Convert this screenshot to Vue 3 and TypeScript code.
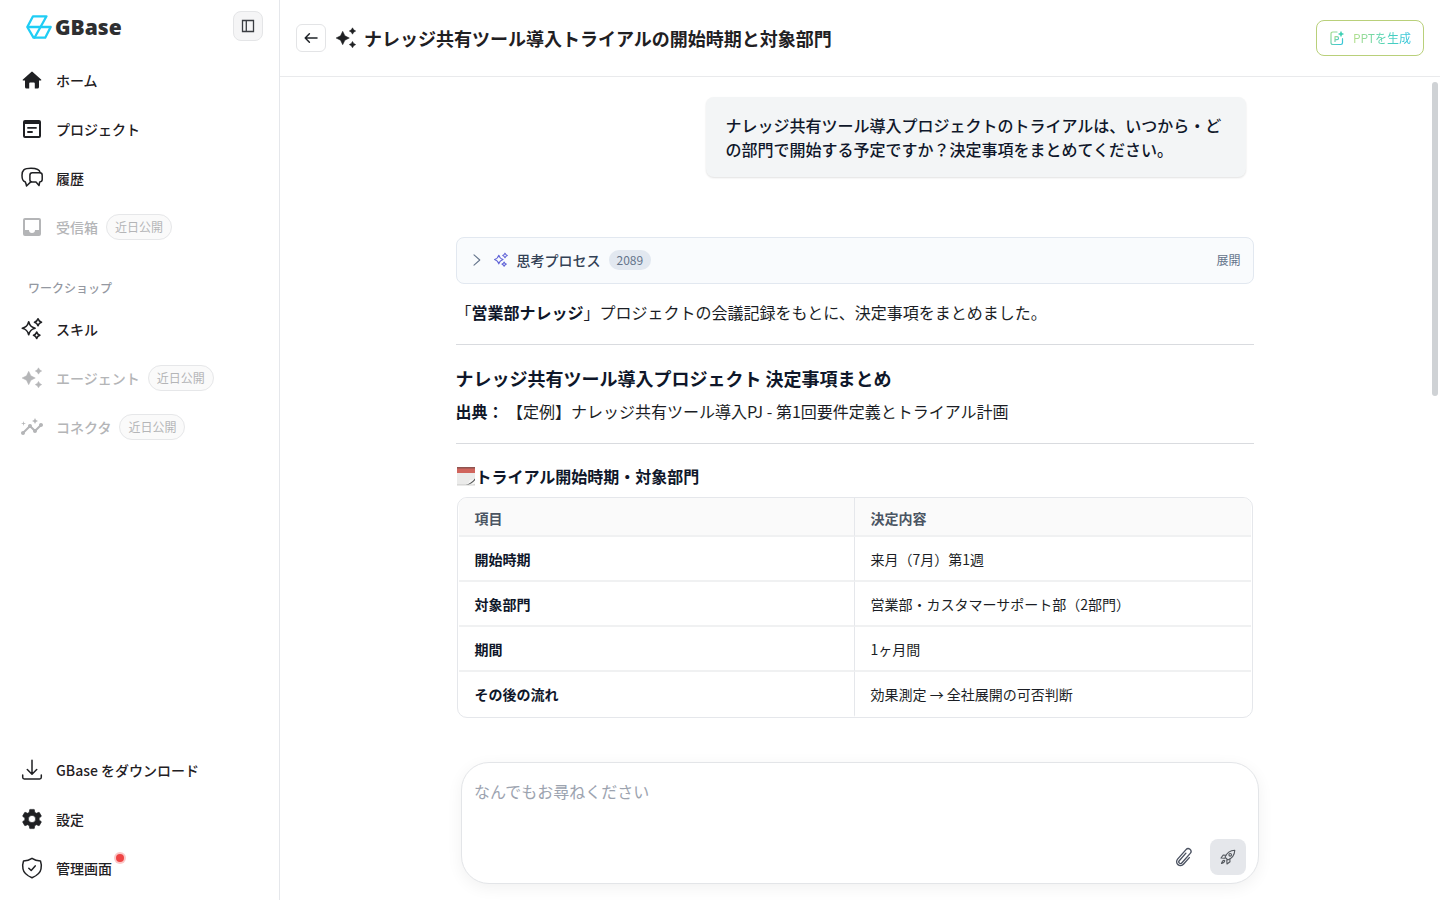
<script setup lang="ts">
import { ref } from 'vue'

interface NavItem {
  label: string
  icon: string
  soon?: boolean
  dot?: boolean
}

const primary: NavItem[] = [
  { label: 'ホーム', icon: 'home' },
  { label: 'プロジェクト', icon: 'project' },
  { label: '履歴', icon: 'history' },
  { label: '受信箱', icon: 'inbox', soon: true },
]

const workshop: NavItem[] = [
  { label: 'スキル', icon: 'skill' },
  { label: 'エージェント', icon: 'agent', soon: true },
  { label: 'コネクタ', icon: 'connector', soon: true },
]

const footer: NavItem[] = [
  { label: 'GBase をダウンロード', icon: 'download' },
  { label: '設定', icon: 'settings' },
  { label: '管理画面', icon: 'admin', dot: true },
]

const groups = [
  { key: 'primary', title: '', items: primary },
  { key: 'workshop', title: 'ワークショップ', items: workshop },
  { key: 'footer', title: '', items: footer },
]

const icons: Record<string, string> = {
  home: '<path fill="currentColor" d="M11.3 3.900a1 1 0 0 1 1.400 0l8.400 7.700c.4.4.2 1-.4 1H19V19a1.600 1.600 0 0 1-1.600 1.600h-2.600v-5.200a.9.9 0 0 0-.9-.9h-3.800a.9.9 0 0 0-.9.9v5.200H6.600A1.600 1.600 0 0 1 5 19v-6.400H3.300c-.6 0-.8-.6-.4-1z"/>',
  project:
    '<path fill="currentColor" fill-rule="evenodd" d="M5 3h14a2 2 0 0 1 2 2v14a2 2 0 0 1-2 2H5a2 2 0 0 1-2-2V5a2 2 0 0 1 2-2zm0 4v12h14V7z"/><path stroke="currentColor" stroke-width="1.800" fill="none" d="M7.300 10.800h9.400M7.300 15h5.400"/>',
  history:
    '<path fill="none" stroke="currentColor" stroke-width="1.500" stroke-linejoin="round" stroke-linecap="round" d="M11 15.600 6.500 20c-.2-1.600-.5-2.900-1.400-4.200C2.900 15.200 2 13.300 2 9.400 2 4.200 3.900 2.200 11 2.200c6.100 0 8.600 1.100 9.100 4.400"/><path fill="none" stroke="currentColor" stroke-width="1.500" stroke-linejoin="round" stroke-linecap="round" d="M12.300 6.800h7.500a2.400 2.400 0 0 1 2.400 2.400v4.400c0 1.600-.8 2.200-2.500 2.400l-.7 3.500-3-3.400h-3.700a2.400 2.400 0 0 1-2.400-2.400V9.200a2.400 2.400 0 0 1 2.400-2.400z"/>',
  inbox:
    '<path fill="currentColor" d="M19 3H5a2 2 0 0 0-2 2v14a2 2 0 0 0 2 2h14a2 2 0 0 0 2-2V5a2 2 0 0 0-2-2zm0 12h-4a3 3 0 0 1-6 0H5V5h14z"/>',
  skill:
    '<g fill="none" stroke="currentColor" stroke-width="1.600" stroke-linejoin="round"><path d="M8.700 4.800c1.100 4 2.400 5.400 6.400 6.500-4 1.100-5.300 2.500-6.400 6.500-1.100-4-2.400-5.400-6.400-6.500 4-1.100 5.300-2.500 6.400-6.500z"/><path d="M18 1.700c.7 2.200 1.300 2.800 3.500 3.500-2.200.7-2.800 1.300-3.500 3.500-.7-2.200-1.300-2.800-3.500-3.500 2.200-.7 2.800-1.300 3.500-3.500z"/><path d="M16.700 15c.6 2 1.200 2.600 3.200 3.200-2 .6-2.600 1.200-3.200 3.200-.6-2-1.200-2.600-3.200-3.200 2-.6 2.600-1.200 3.200-3.200z"/></g>',
  agent:
    '<path fill="currentColor" stroke="currentColor" stroke-width=".5" stroke-linejoin="round" d="M8.700 5.300 10.900 9.800 15.300 12 10.900 14.200 8.700 18.700 6.500 14.200 2.100 12 6.500 9.800zM18.500 1.800l1.200 2 2 1.200-2 1.200-1.200 2-1.200-2-2-1.200 2-1.200zM18.500 15.400l1.200 2 2 1.200-2 1.200-1.200 2-1.200-2-2-1.200 2-1.200z"/>',
  connector:
    '<path fill="currentColor" d="M21 8c-1.450 0-2.260 1.440-1.930 2.510l-3.550 3.560c-.3-.09-.74-.09-1.040 0l-2.550-2.550C12.270 10.450 11.460 9 10 9c-1.450 0-2.270 1.440-1.930 2.520l-4.560 4.550C2.440 15.740 1 16.550 1 18c0 1.100.9 2 2 2 1.450 0 2.260-1.440 1.930-2.510l4.550-4.560c.3.09.74.09 1.040 0l2.550 2.550C12.730 16.550 13.540 18 15 18c1.450 0 2.270-1.440 1.930-2.520l3.560-3.550C21.560 12.260 23 11.450 23 10c0-1.100-.9-2-2-2zM15 9l.94-2.070L18 6l-2.060-.93L15 3l-.92 2.070L12 6l2.080.93zM3.500 11 4 9l2-.5L4 8l-.5-2L3 8l-2 .5L3 9z"/>',
  download:
    '<path fill="none" stroke="currentColor" stroke-width="1.500" stroke-linecap="round" stroke-linejoin="round" d="M12 2.200v13.600M7.300 11.500l4.700 4.700 4.700-4.700M2.700 17v2.300a1.600 1.600 0 0 0 1.600 1.600h15.400a1.600 1.600 0 0 0 1.600-1.600V17"/>',
  settings:
    '<path fill="currentColor" stroke="currentColor" stroke-width=".6" d="M19.140 12.940c.04-.3.06-.61.06-.94 0-.32-.02-.64-.07-.94l2.030-1.580c.18-.14.23-.41.12-.61l-1.920-3.320c-.12-.22-.37-.29-.59-.22l-2.390.96c-.5-.38-1.030-.7-1.620-.94l-.36-2.540c-.04-.24-.24-.41-.48-.41h-3.840c-.24 0-.43.17-.47.41l-.36 2.540c-.59.24-1.130.57-1.620.94l-2.390-.96c-.22-.08-.47 0-.59.22L2.740 8.870c-.12.21-.08.47.12.61l2.030 1.580c-.05.3-.09.63-.09.94s.02.64.07.94l-2.030 1.580c-.18.14-.23.41-.12.61l1.920 3.320c.12.22.37.29.59.22l2.390-.96c.5.38 1.030.7 1.620.94l.36 2.540c.05.24.24.41.48.41h3.840c.24 0 .44-.17.47-.41l.36-2.540c.59-.24 1.130-.56 1.620-.94l2.390.96c.22.08.47 0 .59-.22l1.920-3.320c.12-.22.07-.47-.12-.61zM12 15.600a3.600 3.600 0 1 1 0-7.200 3.600 3.600 0 0 1 0 7.200z"/>',
  admin:
    '<path fill="none" stroke="currentColor" stroke-width="1.500" stroke-linecap="round" stroke-linejoin="round" d="M12 2.300c2.800 2 5.600 2.600 8.500 2.700.9 2.300.9 5.400.5 8-.7 4.300-5 7-9 8.700-4-1.700-8.300-4.400-9-8.700-.4-2.600-.4-5.700.5-8 2.900-.1 5.700-.7 8.500-2.700zM8.800 12.200l2.400 2.300 4-4.600"/>',
}

const rows = [
  { item: '開始時期', decision: '来月（7月）第1週' },
  { item: '対象部門', decision: '営業部・カスタマーサポート部（2部門）' },
  { item: '期間', decision: '1ヶ月間' },
  { item: 'その後の流れ', decision: '効果測定 → 全社展開の可否判断' },
]

const draft = ref('')
</script>

<template>
  <div class="app">
    <aside class="sidebar">
      <div class="brand-row">
        <a class="brand" href="#">
          <svg class="brand-mark" viewBox="0 0 26 24" aria-hidden="true">
            <g fill="none" stroke="#1fcdf5" stroke-width="2.300" stroke-linejoin="round">
              <path d="M7 1.300h13.500L8.500 22.700H7.500L1.300 12z" />
              <path d="M1.300 12h23.400l-5.500 10.700H8" />
            </g>
          </svg>
          <span class="brand-name">GBase</span>
        </a>
        <button class="toggle" type="button" aria-label="サイドバーを切り替え">
          <svg viewBox="0 0 14 14" aria-hidden="true">
            <path fill="none" stroke="#3a3d42" stroke-width="1.300" d="M1.500 1.500h11v11h-11zM5.300 1.500v11" />
          </svg>
        </button>
      </div>
      <nav v-for="group in groups" :key="group.key" class="nav" :class="group.key">
        <h2 v-if="group.title" class="nav-title">{{ group.title }}</h2>
        <button
          v-for="item in group.items"
          :key="item.label"
          class="nav-item"
          type="button"
          :disabled="item.soon"
        >
          <svg class="nav-icon" viewBox="0 0 24 24" aria-hidden="true" v-html="icons[item.icon]"></svg>
          <span class="nav-label">{{ item.label }}<i v-if="item.dot" class="dot"></i></span>
          <span v-if="item.soon" class="soon">近日公開</span>
        </button>
      </nav>
    </aside>

    <main class="main">
      <header class="topbar">
        <button class="back" type="button" aria-label="戻る">
          <svg viewBox="0 0 16 16" aria-hidden="true">
            <path fill="none" stroke="#1f2328" stroke-width="1.500" stroke-linecap="round" stroke-linejoin="round" d="M14 8H2.200M6.400 3.800 2.200 8l4.200 4.200" />
          </svg>
        </button>
        <svg class="title-icon" viewBox="0 0 24 24" aria-hidden="true" v-html="icons.agent"></svg>
        <h1 class="title">ナレッジ共有ツール導入トライアルの開始時期と対象部門</h1>
        <button class="ppt" type="button">
          <svg viewBox="0 0 16 16" aria-hidden="true">
            <defs>
              <linearGradient id="ppt-stroke" x1="0" y1="0" x2="1" y2="1">
                <stop offset="0" stop-color="#a5dc8c" />
                <stop offset="1" stop-color="#2cc4dc" />
              </linearGradient>
            </defs>
            <g fill="none" stroke="url(#ppt-stroke)" stroke-width="1.200" stroke-linecap="round" stroke-linejoin="round">
              <path d="M8 2H3.700A1.700 1.700 0 0 0 2 3.700v9.100a1.700 1.700 0 0 0 1.700 1.700h8.100a1.700 1.700 0 0 0 1.700-1.700V8.700" />
              <path d="M6 11.500V6.700h2a1.500 1.500 0 0 1 0 3H6" />
            </g>
            <path fill="#3fd0b4" d="m12 .8 1 2.200 2.200 1-2.200 1-1 2.200-1-2.200-2.200-1 2.200-1z" />
          </svg>
          <span>PPTを生成</span>
        </button>
      </header>

      <div class="scroller">
        <div class="thread">
          <p class="bubble">ナレッジ共有ツール導入プロジェクトのトライアルは、いつから・どの部門で開始する予定ですか？決定事項をまとめてください。</p>

          <button class="thinking" type="button">
            <svg class="chevron" viewBox="0 0 12 12" aria-hidden="true">
              <path fill="none" stroke="#64748b" stroke-width="1.100" stroke-linecap="round" stroke-linejoin="round" d="M3 .8 8.800 6 3 11.200" />
            </svg>
            <svg class="spark" viewBox="0 0 24 24" aria-hidden="true" v-html="icons.skill"></svg>
            <span class="thinking-title">思考プロセス</span>
            <span class="count">2089</span>
            <span class="expand">展開</span>
          </button>

          <article class="answer">
            <p>「<strong>営業部ナレッジ</strong>」プロジェクトの会議記録をもとに、決定事項をまとめました。</p>
            <hr />
            <h2>ナレッジ共有ツール導入プロジェクト 決定事項まとめ</h2>
            <p class="source"><strong>出典：</strong> 【定例】ナレッジ共有ツール導入PJ - 第1回要件定義とトライアル計画</p>
            <hr />
            <h3>
              <svg class="calendar" viewBox="0 0 20 20" aria-hidden="true">
                <path fill="#ebebea" d="M1 2h18v10l-8 7H1z" />
                <path fill="#d0655d" d="M1 2h18v5H1z" />
                <path fill="#8e5450" d="M1 1h18v1.500H1z" />
                <path fill="#d4d4d2" d="M1 18.300h11l7-.8V19.500H1z" />
                <path fill="#f7f7f6" d="M10 18.300c2.500-1 3.500-2.300 3.800-4.300 2 .2 3.800-.6 5.200-2v5.500l-2 1z" />
                <path fill="#565859" d="M9.800 19c3.300-.8 6.800-3.200 9.200-6.700v2C16.800 17 14 18.800 9.800 19z" />
              </svg>
              <span>トライアル開始時期・対象部門</span>
            </h3>
            <div class="table-card">
              <table>
                <thead>
                  <tr>
                    <th scope="col">項目</th>
                    <th scope="col">決定内容</th>
                  </tr>
                </thead>
                <tbody>
                  <tr v-for="row in rows" :key="row.item">
                    <td><strong>{{ row.item }}</strong></td>
                    <td>{{ row.decision }}</td>
                  </tr>
                </tbody>
              </table>
            </div>
          </article>
        </div>
        <div class="track"><div class="thumb"></div></div>
      </div>

      <form class="composer" @submit.prevent>
        <textarea v-model="draft" aria-label="メッセージ" placeholder="なんでもお尋ねください"></textarea>
        <div class="actions">
          <button class="attach" type="button" aria-label="ファイルを添付">
            <svg viewBox="0 0 24 24" aria-hidden="true">
              <path fill="none" stroke="#4a5160" stroke-width="1.600" stroke-linecap="round" stroke-linejoin="round" d="m18.400 12.700-7.100 8a4.600 4.600 0 0 1-7-6.100L14.400 3.100a3.400 3.400 0 0 1 5.100 4.500L9.300 19.200a2 2 0 0 1-3-2.700l8-9.100" />
            </svg>
          </button>
          <button class="send" type="submit" aria-label="送信">
            <svg viewBox="0 0 16 16" aria-hidden="true">
              <g fill="none" stroke="#53575d" stroke-width="1.100" stroke-linecap="round" stroke-linejoin="round">
                <path d="M5 8.200C6.500 4.500 9.500 1.500 14.800 1.200c-.3 5.300-3.300 8.300-7 9.800z" />
                <circle cx="10.200" cy="5.800" r="1.300" />
                <path d="M6 6.200 3.200 6 1 9l4 .2M9.800 10 10 12.800 7 15l-.2-4M4.200 11.200c-1.800.2-2.300 1.600-2.700 3.300 1.700-.4 3.100-.9 3.300-2.700" />
              </g>
            </svg>
          </button>
        </div>
      </form>
    </main>
  </div>
</template>

<style>
body {
  background: #fff;
}
</style>

<style scoped>
.app {
  display: flex;
  height: 100vh;
  overflow: hidden;
  font-family: 'Noto Sans CJK JP', sans-serif;
  color: #0f172a;
  background: #fff;
}
button {
  font: inherit;
  color: inherit;
  background: none;
  border: 0;
  padding: 0;
  margin: 0;
}
h1,
h2,
h3,
p {
  margin: 0;
}
svg {
  display: block;
  flex: none;
}

/* Sidebar */
.sidebar {
  box-sizing: border-box;
  width: 280px;
  flex: none;
  display: flex;
  flex-direction: column;
  padding: 11px 16px 12px 20px;
  border-right: 1px solid #e5e7eb;
  color: #1f2023;
}
.brand-row {
  display: flex;
  align-items: center;
  justify-content: space-between;
  height: 30px;
  margin-bottom: 19px;
}
.brand {
  display: flex;
  align-items: center;
  gap: 3px;
  padding: 2px 0 0 6px;
  color: #2e2f31;
  text-decoration: none;
}
.brand-mark {
  width: 26px;
  height: 24px;
}
.brand-name {
  font: 800 21px/28px 'Open Sans', sans-serif;
}
.toggle {
  display: grid;
  place-items: center;
  width: 30px;
  height: 30px;
  border: 1px solid #e4e5e7;
  border-radius: 8px;
  background: #f5f5f6;
}
.toggle svg {
  width: 14px;
  height: 14px;
}
.nav {
  display: flex;
  flex-direction: column;
  gap: 9px;
}
.nav.footer {
  margin-top: auto;
}
.nav-title {
  margin: 30px 0 1px 8px;
  font-size: 12px;
  line-height: 22px;
  font-weight: 500;
  color: #9498a1;
}
.nav-item {
  display: flex;
  align-items: center;
  height: 40px;
  font-size: 14px;
  font-weight: 500;
  line-height: 20px;
  text-align: left;
}
.nav-item:disabled {
  color: #b4b5b7;
}
.nav-icon {
  width: 24px;
  height: 24px;
  margin-right: 12px;
}
.nav-label {
  position: relative;
}
.dot {
  position: absolute;
  right: -12px;
  top: -4px;
  width: 8px;
  height: 8px;
  border-radius: 50%;
  background: #ef4444;
  box-shadow: 0 0 0 2px #fbc9c9;
}
.soon {
  margin-left: 8px;
  padding: 0 8px;
  border: 1px solid #e6e7e9;
  border-radius: 13px;
  background: #fafafa;
  font-size: 12px;
  line-height: 24px;
  font-weight: 400;
}

/* Top bar */
.main {
  flex: 1;
  min-width: 0;
  display: flex;
  flex-direction: column;
}
.topbar {
  display: flex;
  align-items: center;
  height: 76px;
  flex: none;
  padding: 0 16px;
  border-bottom: 1px solid #e9eaec;
  color: #1f2023;
}
.back {
  box-sizing: border-box;
  display: grid;
  place-items: center;
  width: 30px;
  height: 28px;
  border: 1px solid #e3e4e6;
  border-radius: 6px;
}
.back svg {
  width: 16px;
  height: 16px;
}
.title-icon {
  width: 24px;
  height: 24px;
  margin: 0 6px 0 8px;
}
.title {
  font-size: 18px;
  line-height: 28px;
  font-weight: 700;
}
.ppt {
  box-sizing: border-box;
  display: flex;
  align-items: center;
  gap: 8px;
  height: 36px;
  margin-left: auto;
  padding: 0 12px;
  border: 1px solid #b9d07a;
  border-radius: 8px;
  font-size: 12px;
  line-height: 20px;
}
.ppt svg {
  width: 16px;
  height: 16px;
}
.ppt span {
  background: linear-gradient(90deg, #b5df8a, #4fd3b4 55%, #2fc3e0);
  -webkit-background-clip: text;
  background-clip: text;
  color: transparent;
}

/* Conversation */
.scroller {
  flex: 1;
  min-height: 0;
  display: flex;
  overflow: hidden;
}
.thread {
  flex: 1;
  max-width: 798px;
  margin: 0 auto;
  padding-top: 20px;
  display: flex;
  flex-direction: column;
}
.track {
  width: 11px;
  flex: none;
  display: flex;
  justify-content: center;
  padding: 5px 0;
}
.thumb {
  width: 6px;
  height: 314px;
  border-radius: 3px;
  background: #cfd2d5;
}
.bubble {
  box-sizing: border-box;
  align-self: flex-end;
  max-width: 540px;
  margin-right: 8px;
  padding: 16px 20px;
  border-radius: 8px;
  background: #f3f5f6;
  box-shadow: 0 1px 2px rgba(0, 0, 0, 0.12);
  font-size: 16px;
  line-height: 24px;
  font-weight: 500;
}
.thinking {
  box-sizing: border-box;
  display: flex;
  align-items: center;
  height: 47px;
  margin-top: 60px;
  padding: 0 12px 2px 14px;
  border: 1px solid #e2e8f0;
  border-radius: 8px;
  background: #f9fbfd;
  color: #334155;
  font-size: 14px;
  line-height: 20px;
}
.chevron {
  width: 12px;
  height: 12px;
  margin-right: 10px;
}
.spark {
  width: 16px;
  height: 16px;
  margin-right: 8px;
  color: #6366d8;
}
.thinking-title {
  font-weight: 500;
}
.count {
  margin-left: 8px;
  padding: 0 8px;
  border-radius: 10px;
  background: #e2e8f0;
  color: #64748b;
  font-size: 12px;
}
.expand {
  margin-left: auto;
  color: #64748b;
  font-size: 12px;
}
.answer {
  padding-top: 16px;
  font-size: 16px;
  line-height: 24px;
  color: #1b1e25;
}
.answer strong,
.answer h2,
.answer h3 {
  font-weight: 700;
  color: #0f172a;
}
.answer hr {
  height: 1px;
  margin: 20px 0 18px;
  border: 0;
  background: #d9dbdf;
}
.answer h2 {
  font-size: 18px;
  line-height: 30px;
}
.answer .source {
  margin-top: 6px;
}
.answer h3 {
  display: flex;
  align-items: center;
  font-size: 16px;
  line-height: 28px;
}
.calendar {
  width: 20px;
  height: 20px;
}
.table-card {
  margin: 7px 1px 0;
  padding: 0 1px;
  border: 1px solid #e5e7eb;
  border-radius: 10px;
  overflow: hidden;
}
table {
  width: 100%;
  table-layout: fixed;
  border-collapse: separate;
  border-spacing: 0;
  font-size: 14px;
  line-height: 20px;
}
th,
td {
  box-sizing: border-box;
  height: 45px;
  padding: 0 16px;
  text-align: left;
  border-bottom: 2px solid #f0f1f2;
}
th {
  height: 39px;
  padding-top: 2px;
  background: #fafafa;
  color: #4b5563;
  font-weight: 600;
}
th:first-child,
td:first-child {
  border-right: 1px solid #e5e7eb;
}
tbody tr:last-child td {
  border-bottom-color: transparent;
}

/* Composer */
.composer {
  box-sizing: border-box;
  width: calc(100% - 32px);
  max-width: 798px;
  margin: 0 auto 16px;
  padding: 16px 12px 8px;
  border: 1px solid #e3e5e8;
  border-radius: 28px;
  background: #fff;
  box-shadow: 0 4px 16px rgba(0, 0, 0, 0.06);
}
textarea {
  display: block;
  width: 100%;
  height: 60px;
  box-sizing: border-box;
  padding: 0;
  border: 0;
  outline: 0;
  resize: none;
  background: none;
  font: inherit;
  font-size: 16px;
  line-height: 24px;
  color: #0f172a;
}
textarea::placeholder {
  color: #9ca3af;
}
.actions {
  display: flex;
  justify-content: flex-end;
  gap: 8px;
}
.attach,
.send {
  display: grid;
  place-items: center;
  width: 36px;
  height: 36px;
  border-radius: 8px;
}
.attach svg {
  width: 20px;
  height: 20px;
}
.send {
  background: #e5e7eb;
}
.send svg {
  width: 16px;
  height: 16px;
}
</style>
